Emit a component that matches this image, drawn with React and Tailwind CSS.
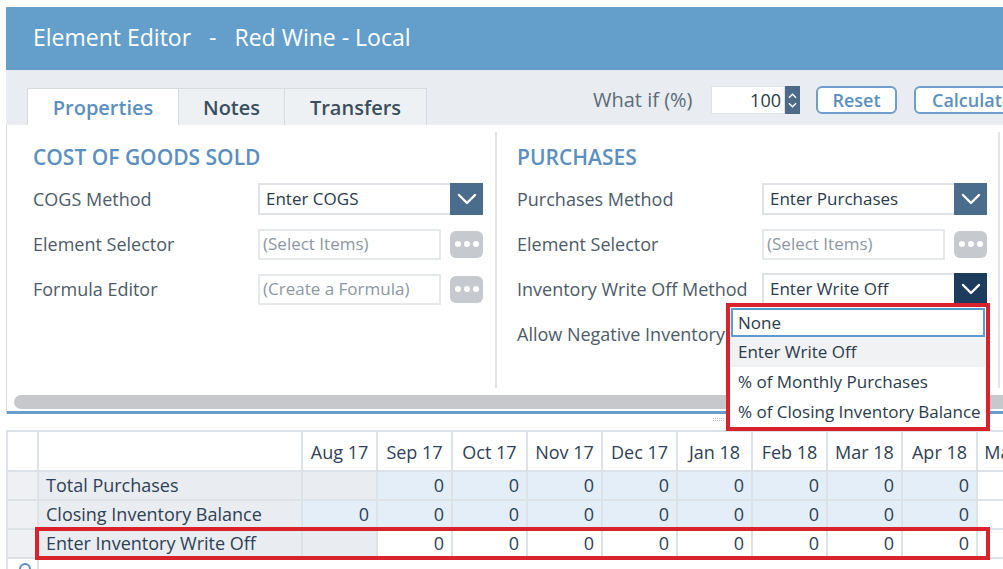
import React from "react";

const Chevron = ({ className = "" }) => (
  <svg viewBox="0 0 20 12" className={className} fill="none" stroke="white" strokeWidth="2.4" strokeLinecap="round" strokeLinejoin="round">
    <polyline points="2,2 10,10 18,2" />
  </svg>
);

const Dots = () => (
  <div className="flex h-[27px] w-[33px] items-center justify-center gap-[3px] rounded-md bg-[#c6c9cd]">
    <span className="h-[6px] w-[6px] rounded-full bg-white" />
    <span className="h-[6px] w-[6px] rounded-full bg-white" />
    <span className="h-[6px] w-[6px] rounded-full bg-white" />
  </div>
);

const Select = ({ value, dark = false }) => (
  <div className="flex h-[32px] w-[225px]">
    <div className="flex flex-1 items-center border-2 border-r-0 border-[#dfe3e7] bg-white pl-[6px] text-[17px] text-[#2a3b4c]">{value}</div>
    <div className={`flex w-[33px] items-center justify-center ${dark ? "bg-[#1d3b5d]" : "bg-[#4b6d8d]"}`}>
      <Chevron className="h-[12px] w-[20px]" />
    </div>
  </div>
);

const Picker = ({ placeholder }) => (
  <div className="flex h-[32px] w-[225px] items-center justify-between">
    <div className="flex h-[31px] w-[183px] items-center border-2 border-[#e6e9ec] bg-white pl-[3px] text-[17px] text-[#8d98a3]">{placeholder}</div>
    <Dots />
  </div>
);

const Row = ({ label, labelW, children }) => (
  <div className="flex h-[32px] items-center">
    <div className={`${labelW} shrink-0 whitespace-nowrap text-[18px] text-[#4d5b69]`}>{label}</div>
    {children}
  </div>
);

const months = ["Aug 17", "Sep 17", "Oct 17", "Nov 17", "Dec 17", "Jan 18", "Feb 18", "Mar 18", "Apr 18", "May 18"];

const rows = [
  { label: "Total Purchases", cells: [null, 0, 0, 0, 0, 0, 0, 0, 0], bg: "bg-[#e4eef8]" },
  { label: "Closing Inventory Balance", cells: [0, 0, 0, 0, 0, 0, 0, 0, 0], bg: "bg-[#e4eef8]" },
  { label: "Enter Inventory Write Off", cells: [null, 0, 0, 0, 0, 0, 0, 0, 0], bg: "bg-white" },
];

export default function App() {
  return (
    <div className="relative h-[569px] w-[1003px] overflow-hidden bg-white pl-[6px] pt-[7px] font-['Open_Sans',sans-serif]">
      {/* title bar */}
      <div className="flex h-[63px] items-center whitespace-nowrap bg-[#649fcc] pl-[27px] pb-[2px] text-[23px] text-white">
        <span>Element Editor</span>
        <span className="ml-[18px]">-</span>
        <span className="ml-[18px]">Red Wine - Local</span>
      </div>

      {/* tabs + toolbar */}
      <div className="flex h-[55px] bg-[#e9edf1] pl-[21px]">
        <div className="flex items-end">
          <div className="flex h-[37px] w-[152px] items-center justify-center border border-b-0 border-[#d5dbe0] bg-white pt-[2px] text-[20px] font-semibold text-[#5b8fc0]">Properties</div>
          <div className="flex h-[37px] w-[106px] items-center justify-center border border-b-0 border-l-0 border-[#d5dbe0] bg-[#eef1f4] pt-[2px] text-[20px] font-semibold text-[#3b4e60]">Notes</div>
          <div className="flex h-[37px] w-[142px] items-center justify-center border border-b-0 border-l-0 border-[#d5dbe0] bg-[#eef1f4] pt-[2px] text-[20px] font-semibold text-[#3b4e60]">Transfers</div>
        </div>
        <div className="ml-[166px] flex shrink-0 items-center pt-[5px]">
          <span className="w-[118px] whitespace-nowrap text-[20px] text-[#5e6b78]">What if (%)</span>
          <div className="flex h-[28px]">
            <div className="flex w-[74px] items-center justify-end border border-[#dde2e6] bg-white pr-[3px] text-[18px] text-[#2b3a48]">100</div>
            <div className="flex w-[15px] flex-col items-center justify-center gap-[3px] bg-[#4d6b88]">
              <svg viewBox="0 0 10 6" className="h-[6px] w-[9px]" fill="none" stroke="white" strokeWidth="1.4"><polyline points="1,5 5,1 9,5" /></svg>
              <svg viewBox="0 0 10 6" className="h-[6px] w-[9px]" fill="none" stroke="white" strokeWidth="1.4"><polyline points="1,1 5,5 9,1" /></svg>
            </div>
          </div>
          <button className="ml-[16px] flex h-[28px] w-[81px] items-center justify-center rounded-md border-2 border-[#6e9ecb] bg-white text-[18px] font-semibold text-[#5b8fc0]">Reset</button>
          <button className="ml-[17px] flex h-[28px] w-[120px] items-center justify-start rounded-md border-2 border-[#6e9ecb] bg-white pl-[16px] text-[18px] font-semibold text-[#5b8fc0]">Calculate</button>
        </div>
      </div>

      {/* properties panel */}
      <div className="flex h-[289px] flex-col border-l border-[#d6dbe0] bg-white">
        <div className="flex flex-1 py-[7px]">
          <div className="w-[490px] border-r-2 border-[#e1e5e9] pl-[26px] pt-[11px]">
            <h2 className="text-[21px] font-semibold leading-[28px] text-[#5b8fc0]">COST OF GOODS SOLD</h2>
            <div className="mt-[12px] flex flex-col gap-[13px]">
              <Row label="COGS Method" labelW="w-[225px]"><Select value="Enter COGS" /></Row>
              <Row label="Element Selector" labelW="w-[225px]"><Picker placeholder="(Select Items)" /></Row>
              <Row label="Formula Editor" labelW="w-[225px]"><Picker placeholder="(Create a Formula)" /></Row>
            </div>
          </div>
          <div className="w-[503px] border-r-2 border-[#e1e5e9] pl-[20px] pt-[11px]">
            <h2 className="text-[21px] font-semibold leading-[28px] text-[#5b8fc0]">PURCHASES</h2>
            <div className="mt-[12px] flex flex-col gap-[13px]">
              <Row label="Purchases Method" labelW="w-[245px]"><Select value="Enter Purchases" /></Row>
              <Row label="Element Selector" labelW="w-[245px]"><Picker placeholder="(Select Items)" /></Row>
              <Row label="Inventory Write Off Method" labelW="w-[245px]"><Select value="Enter Write Off" dark /></Row>
              <Row label="Allow Negative Inventory" labelW="w-[245px]"><span /></Row>
            </div>
          </div>
        </div>
        <div className="mb-[2px] ml-[7px] h-[14px] w-[1010px] rounded-full bg-[#c6c8cc]" />
        <div className="h-[3px] bg-[#6a9dca]" />
      </div>

      {/* splitter grip */}
      <div className="flex h-[16px] items-start pl-[707px] pt-[4px]">
        <div className="grid grid-cols-6 gap-[1px]">
          {Array.from({ length: 12 }).map((_, i) => (
            <span key={i} className="h-[1px] w-[1px] bg-[#b8bec4]" />
          ))}
        </div>
      </div>

      {/* grid */}
      <table className="w-[1045px] table-fixed border-collapse text-[18px] text-[#2e4155]">
        <colgroup>
          <col className="w-[31px]" />
          <col className="w-[264px]" />
          {months.map((m) => (
            <col key={m} className="w-[75px]" />
          ))}
        </colgroup>
        <thead>
          <tr className="h-[40px]">
            <th className="border-2 border-[#dde2e7] bg-white" />
            <th className="border-2 border-[#dde2e7] bg-white" />
            {months.map((m) => (
              <th key={m} className="whitespace-nowrap border-2 border-[#dde2e7] bg-white pt-[2px] text-center font-normal">{m}</th>
            ))}
          </tr>
        </thead>
        <tbody>
          {rows.map((r) => (
            <tr key={r.label} className="h-[29px]">
              <td className="border-2 border-[#dde2e7] bg-[#eef0f3]" />
              <td className="whitespace-nowrap border-2 border-[#dde2e7] bg-[#e9ecf0] pl-[7px] leading-[25px]">{r.label}</td>
              {r.cells.map((c, i) => (
                <td key={i} className={`border-2 border-[#dde2e7] pr-[7px] text-right leading-[25px] ${c === null ? "bg-[#e9ecf0]" : r.bg}`}>{c === null ? "" : c}</td>
              ))}
              <td className="border-2 border-[#dde2e7] bg-white" />
            </tr>
          ))}
          <tr className="h-[29px]">
            <td className="border-2 border-[#dde2e7] bg-white align-top">
              <span className="ml-[11px] mt-[4px] block h-[12px] w-[12px] rounded-full border-2 border-[#5b8fc0]" />
            </td>
            <td colSpan={11} className="border-2 border-[#dde2e7] bg-white" />
          </tr>
        </tbody>
      </table>

      {/* highlight around the write-off row */}
      <div className="pointer-events-none absolute left-[35px] top-[527px] h-[33px] w-[955px] border-4 border-[#d9232c]" />

      {/* open dropdown */}
      <div className="absolute left-[726px] top-[303px] w-[264px] border-4 border-[#d9232c] bg-white p-px text-[17px] text-[#2a3b4c]">
        <div className="flex h-[29px] items-center border-2 border-[#5c9bd1] pl-[5px]">None</div>
        <div className="flex h-[30px] items-center bg-[#f1f2f3] pl-[7px]">Enter Write Off</div>
        <div className="flex h-[30px] items-center pl-[7px]">% of Monthly Purchases</div>
        <div className="flex h-[29px] items-center pl-[7px]">% of Closing Inventory Balance</div>
      </div>
    </div>
  );
}
